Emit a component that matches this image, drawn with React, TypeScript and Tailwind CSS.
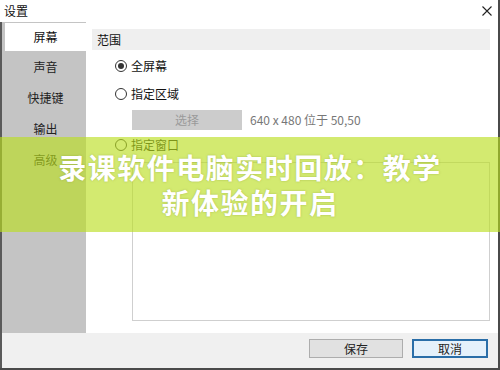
import React from "react"

const font = { fontFamily: '"Noto Sans CJK SC", "Noto Sans", sans-serif' }

function Radio({ checked, label }: { checked?: boolean; label: string }) {
  return (
    <div className="flex items-center gap-[4px] h-[16px]">
      <span className="w-[12px] h-[12px] rounded-full border border-[#333] bg-white flex items-center justify-center">
        {checked && <span className="w-[6px] h-[6px] rounded-full bg-[#333]"></span>}
      </span>
      <span className="text-[12px] text-[#111] leading-none">{label}</span>
    </div>
  )
}

export default function App() {
  const tabs = ["屏幕", "声音", "快捷键", "输出", "高级"]
  return (
    <div className="relative w-[500px] h-[370px] overflow-hidden bg-white" style={font}>
      <div className="w-full h-full flex flex-col border-r-2 border-b-2 border-[#4a4a4a]">
        {/* title bar */}
        <div className="h-[22px] flex items-center justify-between pl-[4px] pr-[6px]">
          <span className="text-[12px] text-[#111] leading-none">设置</span>
          <svg width="10" height="10" viewBox="0 0 10 10" className="text-[#222]">
            <path d="M0.5 0.5 L9.5 9.5 M9.5 0.5 L0.5 9.5" stroke="currentColor" strokeWidth="1.1" />
          </svg>
        </div>

        <div className="flex flex-1 border-l-2 border-[#5a5a5a]">
          {/* sidebar */}
          <div className="w-[84px] bg-[#c4c4c4] pl-[3px] pt-[1px] flex flex-col">
            {tabs.map((t, i) => (
              <div
                key={t}
                className={
                  i === 0
                    ? "h-[28px] bg-white flex items-center justify-center text-[12px] text-[#111]"
                    : "h-[31px] flex items-center justify-center text-[12px] text-[#222]"
                }
              >
                {t}
              </div>
            ))}
          </div>

          {/* content */}
          <div className="flex-1 pl-[6px] pr-[8px] pt-[7px] flex flex-col">
            <div className="h-[21px] bg-[#efefef] flex items-center pl-[5px] text-[12px] text-[#111]">范围</div>
            <div className="pl-[23px] pt-[8px] flex flex-col">
              <Radio checked label="全屏幕" />
              <div className="h-[12px]"></div>
              <Radio label="指定区域" />
              <div className="flex items-center gap-[8px] pl-[17px] mt-[8px]">
                <div className="w-[110px] h-[20px] bg-[#cccccc] flex items-center justify-center text-[12px] text-[#9a9a9a]">
                  选择
                </div>
                <span className="text-[12px] text-[#777]">640 x 480 位于 50,50</span>
              </div>
              <div className="mt-[7px]">
                <Radio label="指定窗口" />
              </div>
              <div className="ml-[17px] mt-[9px] h-[159px] border border-[#cfcfcf]"></div>
            </div>
          </div>
        </div>

        {/* footer */}
        <div className="h-[35px] bg-[#f0f0f0] border-l-2 border-[#5a5a5a] flex items-center justify-end gap-[9px] pr-[10px] pb-[4px]">
          <button className="w-[94px] h-[19px] bg-[#e1e1e1] border border-[#adadad] text-[12px] text-[#222] leading-none">
            保存
          </button>
          <button className="w-[76px] h-[19px] bg-[#e5f1fb] border-2 border-[#2a6ea8] text-[12px] text-[#222] leading-none">
            取消
          </button>
        </div>
      </div>

      {/* banner overlay */}
      <div className="absolute left-0 right-0 top-[137px] h-[95px] bg-[rgba(186,222,32,0.64)] flex flex-col items-center justify-center">
        <div className="text-white font-bold text-[28px] leading-[35px] tracking-[1.5px] text-center [text-shadow:0_0_2px_rgba(120,140,40,0.5)]">
          录课软件电脑实时回放：教学
          <br />
          新体验的开启
        </div>
      </div>
    </div>
  )
}
